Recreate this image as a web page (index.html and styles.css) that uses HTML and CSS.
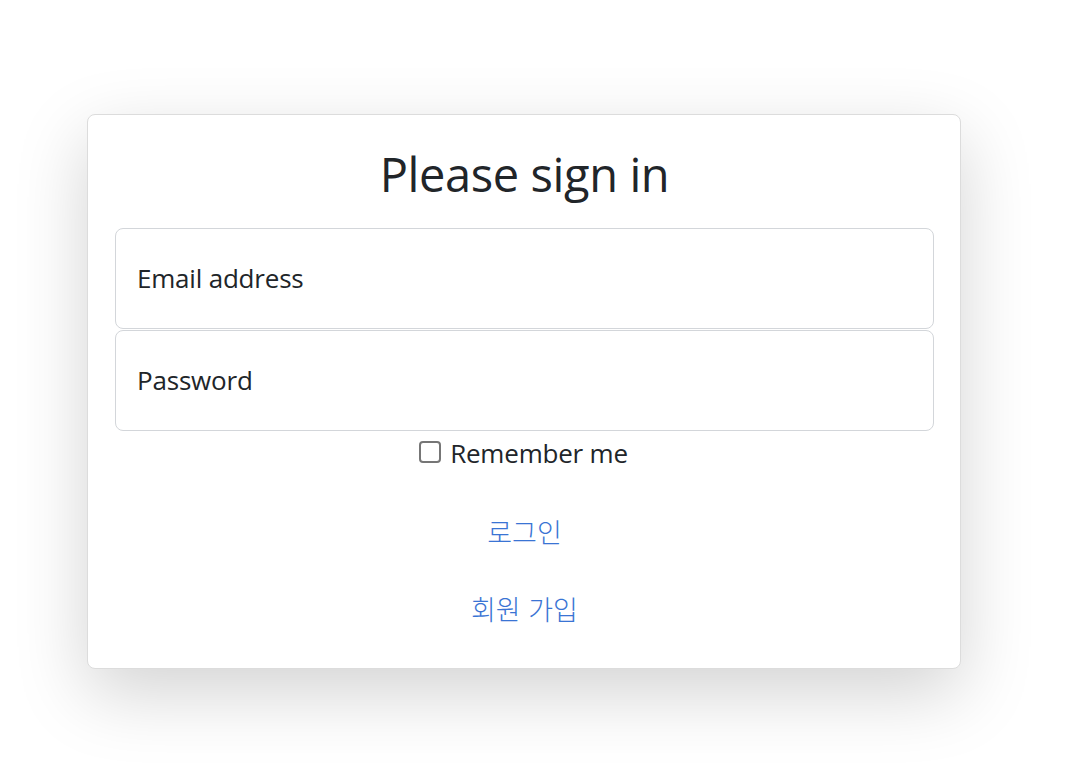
FILE: index.html
```html
<!DOCTYPE html>
<html lang="ko">
<head>
<meta charset="utf-8">
<title>Please sign in</title>
<link rel="stylesheet" href="styles.css">
</head>
<body>
<main class="page">
  <form class="card">
    <h1 class="title">Please sign in</h1>
    <div class="fields">
      <div class="field"><span class="placeholder">Email address</span></div>
      <div class="field"><span class="placeholder">Password</span></div>
    </div>
    <label class="remember"><span class="box"></span>Remember me</label>
    <a class="link login" href="#">로그인</a>
    <a class="link join" href="#">회원 가입</a>
  </form>
</main>
</body>
</html>
```
FILE: styles.css
```css
html, body {
  margin: 0;
  padding: 0;
  background: #ffffff;
  min-height: 780px;
}
body {
  font-family: "Open Sans", "Noto Sans CJK KR", sans-serif;
  color: #212529;
}
.page {
  min-height: 780px;
  box-sizing: border-box;
  padding: 114px 0 0 87px;
}
.card {
  width: 874px;
  height: 555px;
  box-sizing: border-box;
  border: 1px solid #dcdcdc;
  border-radius: 8px;
  background: #fff;
  box-shadow: 0 24px 72px rgba(0, 0, 0, 0.175);
  padding: 27px 26px 0 27px;
  display: flex;
  flex-direction: column;
  align-items: stretch;
}
.title {
  margin: 0;
  height: 86px;
  font-weight: 400;
  font-size: 47px;
  line-height: 64px;
  text-align: center;
  letter-spacing: -0.4px;
}
.fields {
  display: flex;
  flex-direction: column;
  gap: 1px;
}
.field {
  height: 101px;
  border: 1px solid #d3d6da;
  border-radius: 8px;
  box-sizing: border-box;
  display: flex;
  align-items: center;
  padding-left: 21px;
  padding-bottom: 2px;
}
.placeholder {
  font-size: 26px;
  letter-spacing: -0.2px;
}
.remember {
  align-self: center;
  display: flex;
  align-items: center;
  gap: 9px;
  height: 44px;
  margin-left: -2px;
  font-size: 26px;
  letter-spacing: -0.2px;
}
.box {
  width: 22px;
  height: 22px;
  border: 2px solid #767676;
  border-radius: 4px;
  box-sizing: border-box;
  margin-bottom: 2px;
}
.link {
  align-self: center;
  color: #3a74d4;
  text-decoration: none;
  font-family: "Noto Sans CJK KR", sans-serif;
  font-weight: 300;
  font-size: 27px;
  line-height: 36px;
}
.login {
  margin-top: 39px;
}
.join {
  margin-top: 41px;
}
```
